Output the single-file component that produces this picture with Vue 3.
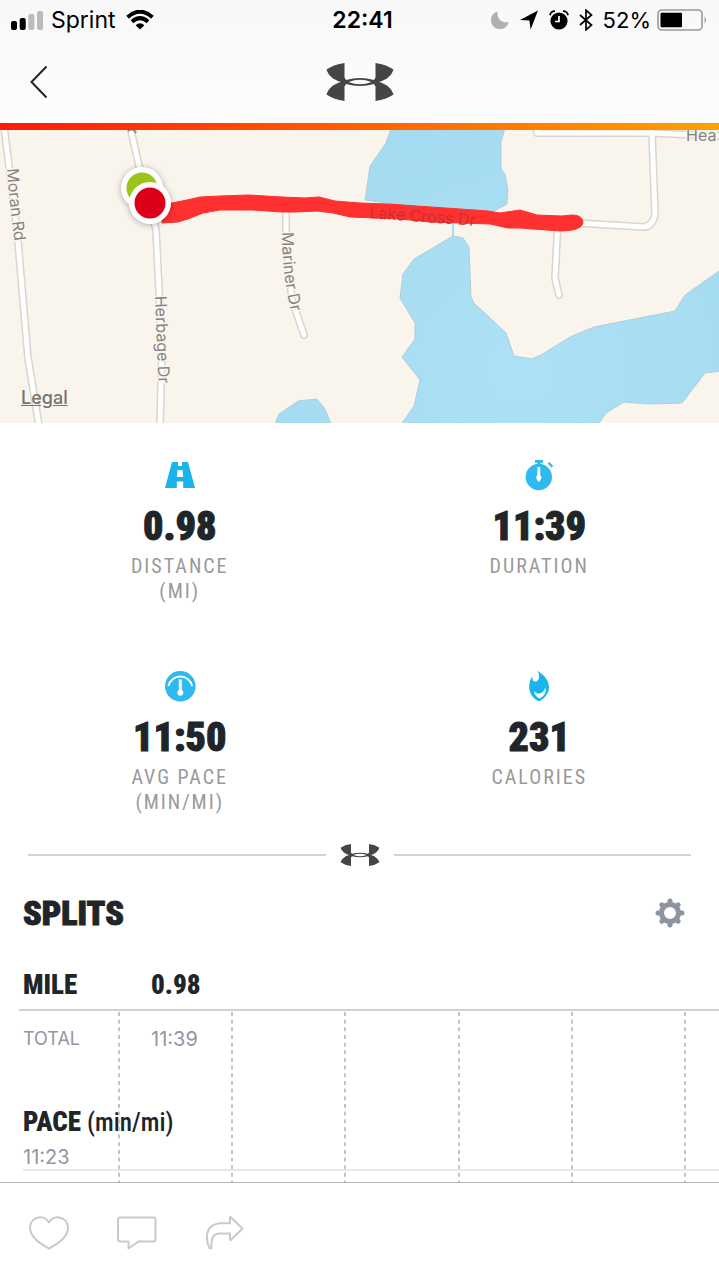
<template>
  <div class="app">
    <header class="header">
      <div class="status-bar">
        <div class="status-left">
          <svg class="signal" width="32" height="20" viewBox="0 0 32 20" aria-hidden="true">
            <rect x="0" y="11" width="6" height="9" rx="2" />
            <rect x="8.7" y="8" width="6" height="12" rx="2" />
            <rect class="dim" x="17.4" y="4" width="6" height="16" rx="2" />
            <rect class="dim" x="26" y="1" width="6" height="19" rx="2" />
          </svg>
          <span>Sprint</span>
          <svg class="wifi" width="28" height="20" viewBox="0 0 28 20" aria-hidden="true">
            <path d="M1.6 7.2Q14-3.8 26.4 7.2" />
            <path d="M6 11.8Q14 4.6 22 11.8" />
            <path class="solid" d="M9.6 15.2Q14 11.4 18.4 15.2L14 19.6z" />
          </svg>
        </div>
        <time class="clock">22:41</time>
        <div class="status-right">
          <svg width="18" height="18" viewBox="0 0 18 18" aria-hidden="true">
            <path fill="#b0b0b0" d="M6.5.5C5.8 7.8 10 12.2 17.7 11.2A9 9 0 1 1 6.5.5z" />
          </svg>
          <svg width="20" height="20" viewBox="0 0 20 20" aria-hidden="true">
            <path d="M19 .5L11.600 19.500 10.400 10.500 1 10z" />
          </svg>
          <svg width="20" height="20" viewBox="0 0 20 20" aria-hidden="true">
            <circle cx="10" cy="11" r="8.6" />
            <path d="M1 5.200A5 5 0 0 1 6 1.200M14 1.200A5 5 0 0 1 19 5.200" fill="none" stroke="#000" stroke-width="1.8" />
            <path d="M10 6v5.500H6" fill="none" stroke="#fff" stroke-width="1.7" />
          </svg>
          <svg width="14" height="22" viewBox="0 0 14 22" aria-hidden="true">
            <path d="M1 6l11.500 10L7 20.800V1.200L12.500 6 1 16" fill="none" stroke="#000" stroke-width="1.7" />
          </svg>
          <span class="percent">52%</span>
          <svg class="battery" width="51" height="22" viewBox="0 0 51 22" aria-hidden="true">
            <rect x="1" y="1" width="44" height="20" rx="4" fill="none" stroke="#999" stroke-width="1.6" />
            <rect x="3.5" y="3.7" width="21.5" height="14.6" rx="1" />
            <path d="M47.600 7.200Q50.400 11 47.600 14.800z" fill="#999" />
          </svg>
        </div>
      </div>
      <nav class="nav">
        <button class="back" type="button" aria-label="Back">
          <svg width="18" height="34" viewBox="0 0 18 34" aria-hidden="true">
            <path d="M16.500 1.500L1.500 17l15 15.500" />
          </svg>
        </button>
        <svg class="logo" width="68" height="38" viewBox="0 0 68 38" aria-hidden="true">
          <path :d="logoPath" fill-rule="evenodd" />
        </svg>
      </nav>
    </header>

    <section class="map">
      <svg class="map-canvas" viewBox="0 0 719 293" preserveAspectRatio="xMidYMid slice" aria-hidden="true">
        <defs>
          <radialGradient id="lake" gradientUnits="userSpaceOnUse" cx="520" cy="240" r="260">
            <stop offset="0" stop-color="#ade1f5" />
            <stop offset="1" stop-color="#a5dbf0" />
          </radialGradient>
          <path id="moran" d="M7 39Q9 70 15 114" />
          <path id="herbage" d="M155 166L159 268" />
          <path id="mariner" d="M282 102Q282 145 292 186" />
          <path id="lakeCross" d="M369 88L477 96" />
        </defs>
        <rect width="719" height="293" fill="#f9f5ed" />
        <g class="water">
          <path v-for="(d, i) in lakes" :key="i" :d="d" />
          <path class="stream" d="M453 72V107" />
        </g>
        <g class="road-edge">
          <path v-for="(d, i) in roads" :key="i" :d="d" />
        </g>
        <g class="road">
          <path v-for="(d, i) in roads" :key="i" :d="d" />
        </g>
        <path
          class="route"
          d="M162 73L172 73 187 70 200 67 220 66 248 65 282 67 305 68 319 67 335 71 360 73 388 74 460 79 488 81 500 83 520 80 537 85 562 86 572 85Q583 85 583 93 581 101 560 101L520 98 508 98 490 94 430 92 400 89 350 87 333 83 317 81 295 82 282 82 253 80 220 80 203 83 188 89 178 92 162 93z"
        />
        <g class="labels">
          <text><textPath href="#moran">Moran Rd</textPath></text>
          <text><textPath href="#herbage">Herbage Dr</textPath></text>
          <text><textPath href="#mariner">Mariner Dr</textPath></text>
          <text x="686" y="11">Hea</text>
          <text class="on-route"><textPath href="#lakeCross">Lake Cross Dr</textPath></text>
        </g>
        <path d="M128 1Q133-3 136 3" fill="none" stroke="#8d8a86" stroke-width="2" />
        <g class="pins">
          <circle cx="142" cy="58" r="21" />
          <circle cx="142" cy="58" r="15.5" fill="#9bc31c" />
          <circle cx="150" cy="73" r="21" />
          <circle cx="150" cy="73" r="15.5" fill="#dc0019" />
        </g>
      </svg>
      <a class="legal" href="#legal">Legal</a>
    </section>

    <section class="stats">
      <div v-for="stat in stats" :key="stat.label" class="stat">
        <svg class="stat-icon" width="32" height="32" viewBox="0 0 32 32" aria-hidden="true">
          <g v-if="stat.icon === 'road'">
            <path d="M8 3H24L31 29H1z" />
            <path class="cut" d="M14 2H18V7H14zM13.500 11H18.500L19.200 18H12.800zM12.800 22.500H19.200V30H12.800z" />
          </g>
          <g v-else-if="stat.icon === 'timer'" class="light">
            <path d="M12 1h8v2.800h-2.500V6h-3V3.800H12zM24.600 4.600l1.600-1.500 4 3.600-1.600 1.700z" />
            <circle cx="15.8" cy="18" r="13.2" />
            <path class="cut" d="M14.400 8h2.800v8.200a3 3 0 0 1 .4 4.200l-1 2h-1.600l-1-2a3 3 0 0 1 .4-4.200z" />
          </g>
          <g v-else-if="stat.icon === 'pace'" class="light">
            <circle cx="16.3" cy="16.3" r="15.3" />
            <path class="cut-line" d="M4.500 16A12 11.500 0 0 1 28.100 16" />
            <path class="cut" d="M14.800 9.500h3v10.600a3 3 0 1 1-3 0z" />
          </g>
          <g v-else>
            <path d="M14.300.7C22 5.500 26 10.500 26 18 25.500 24.500 20 29.800 16 31.200 11 29.500 6.400 24 6.200 17.500 6 12.500 7.500 9 9.500 6 8.800 9.500 10 11.500 12 11.600 16.500 11.600 17.500 5.500 14.300.7z" />
            <path class="cut" d="M11 20.500C13 25.300 20.500 24.700 22.200 17.500 24.300 22.500 20.500 26.500 16.500 28.700 13.500 26.900 11 24 11 20.500z" />
          </g>
        </svg>
        <strong class="stat-value">{{ stat.value }}</strong>
        <span class="stat-label">{{ stat.label }}</span>
        <span v-if="stat.unit" class="stat-label">{{ stat.unit }}</span>
      </div>
    </section>

    <div class="divider">
      <svg width="40" height="22" viewBox="0 0 68 38" aria-hidden="true">
        <path :d="logoPath" fill-rule="evenodd" />
      </svg>
    </div>

    <section class="splits">
      <div class="splits-head">
        <h2>SPLITS</h2>
        <button class="settings" type="button" aria-label="Split settings">
          <svg width="30" height="30" viewBox="0 0 30 30" aria-hidden="true">
            <circle cx="15" cy="15" r="8.5" />
            <path d="M15 6V3M15 24v3M6 15H3M24 15h3M8.500 8.500L6.800 6.800M21.500 8.500l1.700-1.700M8.500 21.500l-1.700 1.700M21.500 21.500l1.700 1.700" />
          </svg>
        </button>
      </div>
      <table class="split-table">
        <thead>
          <tr>
            <th scope="col">MILE</th>
            <th scope="col">0.98</th>
          </tr>
        </thead>
        <tbody>
          <tr>
            <td>TOTAL</td>
            <td class="time">11:39</td>
          </tr>
        </tbody>
      </table>
      <div class="pace">
        <h3>PACE <span>(min/mi)</span></h3>
        <p>11:23</p>
      </div>
      <svg class="grid-lines" aria-hidden="true">
        <line v-for="x in gridLines" :key="x" :x1="x" :x2="x" y1="1" y2="100%" />
      </svg>
    </section>

    <footer class="toolbar">
      <button type="button" aria-label="Like">
        <svg width="40" height="34" viewBox="0 0 40 34" aria-hidden="true">
          <path d="M20 32.700C13 28.300 1 22 1 11.500 1 1 15-2.500 20 6.500 25-2.500 39 1 39 11.500 39 22 27 28.300 20 32.700z" />
        </svg>
      </button>
      <button type="button" aria-label="Comment">
        <svg width="40" height="34" viewBox="0 0 40 34" aria-hidden="true">
          <path d="M3 1.500H36.500Q38.500 1.500 38.500 3.500V23.500Q38.500 25.500 36.500 25.500H21.500L11.500 32.500V25.500H3Q1 25.500 1 23.500V3.500Q1 1.500 3 1.500z" />
        </svg>
      </button>
      <button type="button" aria-label="Share">
        <svg width="40" height="34" viewBox="0 0 40 34" aria-hidden="true">
          <path d="M25.500 1L37.500 12.500 25.500 24.300 25 23.500V17.500H14C8 18 6 22 6.500 32L4.500 32.300C-1 20 2 8.500 15 7.300H25V1.500z" />
        </svg>
      </button>
    </footer>
  </div>
</template>

<script setup>
const logoPath =
  'M.5 6.500Q8 1.300 18.500 0V14.500L20 17Q34 13 48 17L49.500 14.500V0Q60 1.300 67.500 6.500C65.500 13 60 17 53 19 60 21 65.500 25 67.500 31.500Q60 36.700 49.500 38V23.500L48 21Q34 25 20 21L18.500 23.500V38Q8 36.700.5 31.500C2.500 25 8 21 15 19 8 17 2.500 13 .5 6.500zM22.500 19Q34 23.500 45.500 19 34 14.500 22.500 19z'

const lakes = [
  'M391-2L386 13 370 36 365 70 453 82 494 81 507 74 508 60 505 44 501 39 501 12 505-2z',
  'M453 106L463 108 469 117 471 167 474 173 506 203 514 226 532 229 541 225 570 207 594 197 675 181 685 165 722 139V241L705 243 682 273 649 274 624 272 606 283 597 296H400L414 276 420 250 402 227 415 209V193L400 168 403 144 414 129z',
  'M274 296L279 284 298 271 317 269 325 279 332 296z'
]

const roads = [
  'M4-4L17 100 28 228 39 296',
  'M130-4L140 40 150 75 156 100 162 220 160 296',
  'M537-4V3H650L719 6',
  'M652 3L655 84Q653 96 644 97L560 92',
  'M558 90L555 148 559 165',
  'M286 80V110L292 170 304 205'
]

const stats = [
  { icon: 'road', value: '0.98', label: 'DISTANCE', unit: '(MI)' },
  { icon: 'timer', value: '11:39', label: 'DURATION', unit: '' },
  { icon: 'pace', value: '11:50', label: 'AVG PACE', unit: '(MIN/MI)' },
  { icon: 'calories', value: '231', label: 'CALORIES', unit: '' }
]

const gridLines = [119, 232, 345, 459, 572, 685].map((x) => x - 19)
</script>

<style>
body {
  margin: 0;
  background: #fff;
}
</style>

<style scoped>
.app {
  min-height: 100vh;
  display: flex;
  flex-direction: column;
  color: #20252a;
  font-family: Inter, "Liberation Sans", sans-serif;
}

button {
  padding: 0;
  border: none;
  background: none;
  cursor: pointer;
}

svg {
  display: block;
}

/* header */
.header {
  padding-bottom: 7px;
  background:
    linear-gradient(90deg, #ff1a08, #ff6000 50%, #ffa200) bottom / 100% 7px no-repeat,
    linear-gradient(#f8f8f8, #fdfdfd);
}

.status-bar {
  height: 40px;
  padding: 0 11px;
  display: grid;
  grid-template-columns: 1fr auto 1fr;
  align-items: center;
  color: #000;
  font-size: 23px;
}

.status-left,
.status-right {
  display: flex;
  align-items: center;
  gap: 8px;
}

.status-right {
  justify-content: flex-end;
  gap: 10px;
}

.signal .dim {
  fill: #bbb;
}

.wifi {
  margin-left: 2px;
  fill: none;
  stroke: #000;
  stroke-width: 4;
}

.wifi .solid {
  fill: #000;
  stroke: none;
}

.clock {
  padding-left: 6px;
  font-weight: 600;
}

.percent {
  font-size: 22px;
}

.battery {
  margin-left: -4px;
}

.nav {
  height: 83px;
  display: grid;
  grid-template-columns: 1fr auto 1fr;
  align-items: center;
}

.back {
  justify-self: start;
  margin-left: 30px;
}

.back path {
  fill: none;
  stroke: #20252a;
  stroke-width: 2;
}

.logo,
.divider svg {
  fill: #454545;
}

/* map */
.map {
  position: relative;
  height: 293px;
}

.map-canvas {
  width: 100%;
  height: 100%;
}

.water path {
  fill: url(#lake);
  stroke: #b0cedb;
  stroke-width: 1;
}

.water .stream {
  stroke: #a5dbf0;
  stroke-width: 2;
}

.road-edge,
.road {
  fill: none;
  stroke: #d9d5cf;
  stroke-width: 8;
  stroke-linecap: round;
  stroke-linejoin: round;
}

.road {
  stroke: #fff;
  stroke-width: 5;
}

.route {
  fill: #ff3030;
  stroke: #ff3030;
  stroke-width: 1;
  stroke-linejoin: round;
}

.labels {
  fill: #85827f;
  stroke: #f9f5ed;
  stroke-width: 3;
  paint-order: stroke;
  font-size: 16px;
}

.labels .on-route {
  fill: #c93030;
  stroke: none;
}

.pins {
  fill: #fff;
  filter: drop-shadow(0 1px 3px rgba(0, 0, 0, 0.3));
}

.legal {
  position: absolute;
  left: 21px;
  bottom: 15px;
  color: #77736d;
  font-size: 18px;
  font-weight: 500;
  line-height: 20px;
}

/* stats */
.stats {
  padding-top: 36px;
  display: grid;
  grid-template-columns: 1fr 1fr;
  row-gap: 66px;
}

.stat {
  display: flex;
  flex-direction: column;
  align-items: center;
}

.stat-icon {
  fill: #1ab4ec;
}

.stat-icon .light {
  fill: #2ebaf0;
}

.stat-icon .cut {
  fill: #fff;
}

.stat-icon .cut-line {
  fill: none;
  stroke: #fff;
  stroke-width: 2;
}

.stat-value,
.stat-label,
.splits h2,
.split-table th,
.pace h3 {
  font-family: "Roboto Condensed", "Liberation Sans Narrow", Roboto, sans-serif;
}

.stat-value {
  margin: 12px 0 3px;
  font-size: 40px;
  font-weight: 900;
  line-height: 48px;
  -webkit-text-stroke: 1px #20252a;
}

.stat-label {
  color: #999;
  font-size: 20px;
  line-height: 25px;
  letter-spacing: 2px;
}

/* divider */
.divider {
  margin: 29px 28px 0;
  display: flex;
  align-items: center;
  gap: 14px;
}

.divider::before,
.divider::after {
  content: "";
  flex: 1;
  height: 2px;
  background: #d2d4d6;
}

/* splits */
.splits {
  position: relative;
  flex: 1;
  padding-left: 19px;
}

.splits-head {
  height: 94px;
  padding: 0 34px 0 4px;
  display: flex;
  align-items: center;
  justify-content: space-between;
}

.splits h2 {
  margin: 0;
  font-size: 34px;
  font-weight: 900;
  -webkit-text-stroke: 1px #20252a;
}

.settings svg {
  fill: none;
  stroke: #8d94a1;
  stroke-width: 5;
  stroke-linecap: round;
}

.split-table {
  width: 100%;
  table-layout: fixed;
  border-collapse: collapse;
  text-align: left;
}

.split-table th {
  height: 49px;
  padding: 0 0 0 4px;
  border-bottom: 2px solid #cfd1d4;
  font-size: 27px;
  font-weight: 900;
}

.split-table th:first-child {
  width: 124px;
}

.split-table td {
  height: 55px;
  padding: 0 0 0 4px;
  color: #9296a2;
  font-size: 18px;
}

.split-table .time {
  font-size: 20px;
}

.pace {
  padding: 40px 0 0 4px;
}

.pace h3 {
  margin: 0;
  font-size: 27px;
  font-weight: 900;
  line-height: 32px;
}

.pace h3 span {
  font-size: 25px;
  font-weight: 500;
}

.pace p {
  margin: 0;
  padding: 6px 0 0;
  border-bottom: 2px solid #e8e8ea;
  color: #9296a2;
  font-size: 20px;
  line-height: 24px;
}

.grid-lines {
  position: absolute;
  left: 19px;
  top: 145px;
  width: calc(100% - 19px);
  height: calc(100% - 145px);
}

.grid-lines line {
  stroke: #c3c4c7;
  stroke-width: 2;
  stroke-dasharray: 4 3.66;
}

/* toolbar */
.toolbar {
  height: 95px;
  padding-left: 29px;
  border-top: 1px solid #b4b4b6;
  display: flex;
  align-items: center;
  gap: 48px;
}

.toolbar button {
  padding-top: 4px;
}

.toolbar svg {
  fill: none;
  stroke: #c6c9cf;
  stroke-width: 2;
  stroke-linejoin: round;
}
</style>
